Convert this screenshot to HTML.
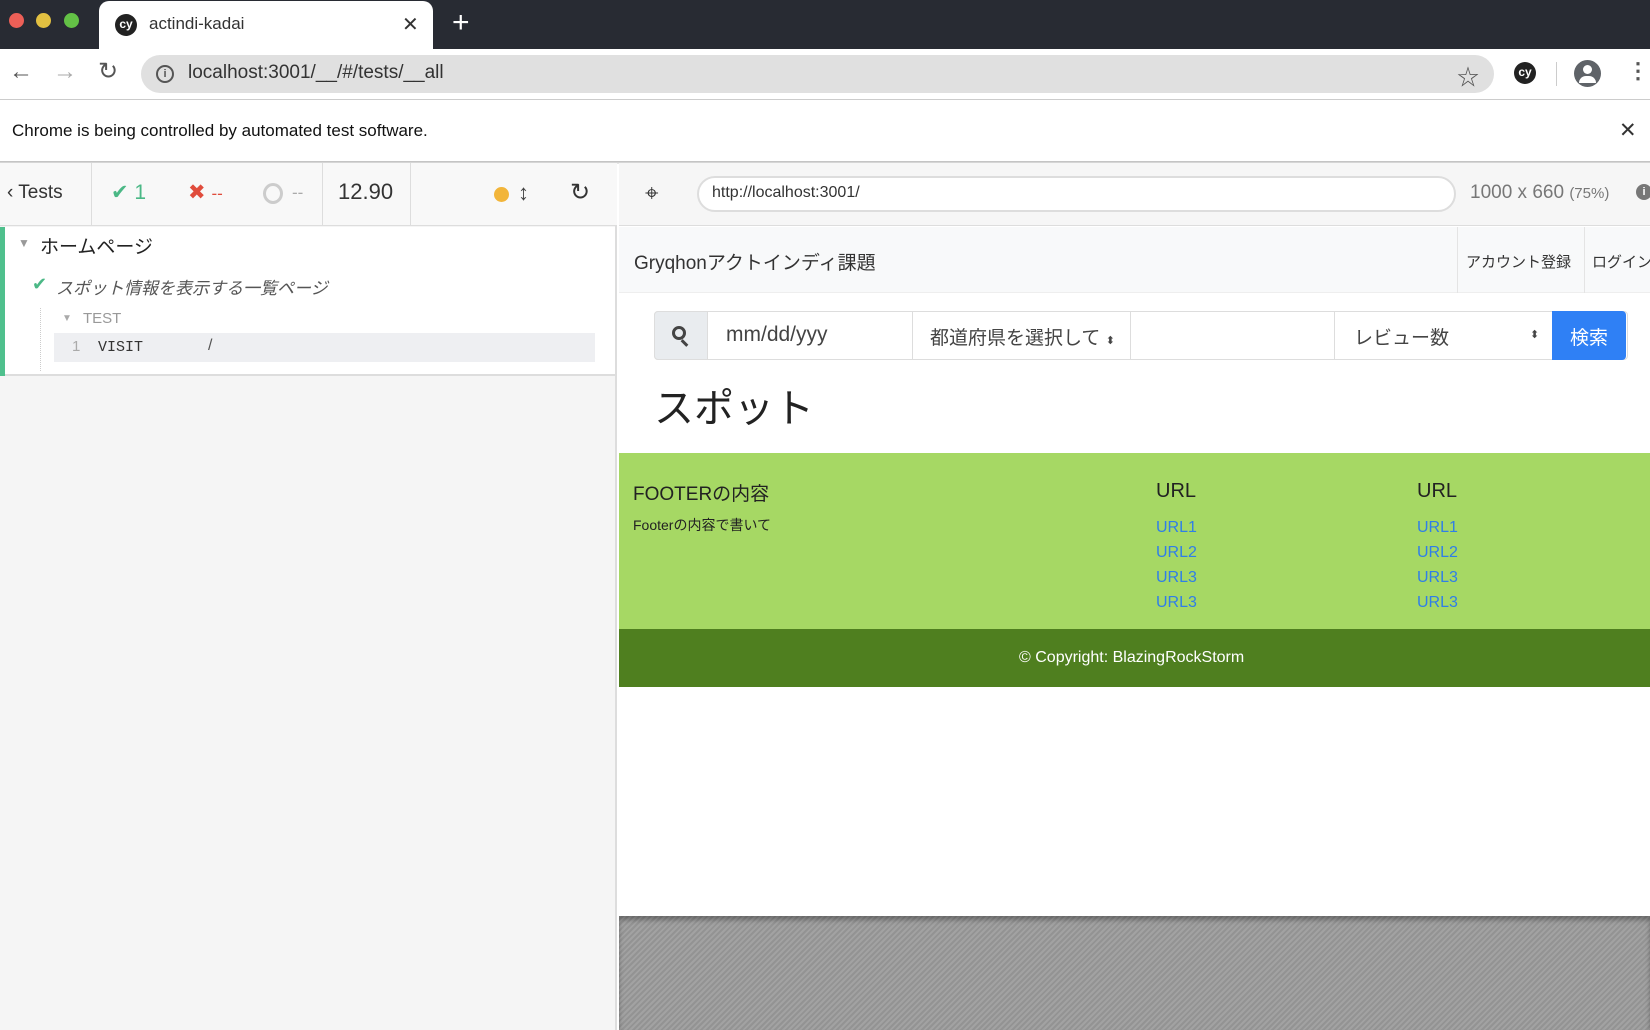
<!DOCTYPE html>
<html><head><meta charset="utf-8"><style>
*{margin:0;padding:0;box-sizing:border-box}
body{width:1650px;height:1030px;overflow:hidden;position:relative;font-family:"Liberation Sans","Noto Sans CJK JP",sans-serif;background:#fff;color:#222}
.a{position:absolute}
.t{white-space:nowrap}
</style></head><body>
<div class="a" style="left:0;top:0;width:1650px;height:49px;background:#282b33"></div>
<div class="a" style="left:9px;top:13px;width:15px;height:15px;border-radius:50%;background:#ec5f57"></div>
<div class="a" style="left:36px;top:13px;width:15px;height:15px;border-radius:50%;background:#e2c041"></div>
<div class="a" style="left:64px;top:13px;width:15px;height:15px;border-radius:50%;background:#63c146"></div>
<div class="a" style="left:99px;top:1px;width:334px;height:48px;background:#fff;border-radius:10px 10px 0 0"></div>
<div class="a t" style="left:115px;top:14px;width:22px;height:22px;border-radius:50%;background:#222;color:#fff;font-size:12px;font-weight:bold;text-align:center;line-height:21px">cy</div>
<div class="a t" style="left:149px;top:14px;font-size:17px;color:#333">actindi-kadai</div>
<div class="a t" style="left:402px;top:12px;font-size:20px;color:#333">✕</div>
<div class="a t" style="left:452px;top:6px;font-size:30px;color:#fff;font-weight:300">+</div>
<div class="a" style="left:0;top:49px;width:1650px;height:51px;background:#fff;border-bottom:1px solid #ccc"></div>
<div class="a t" style="left:9px;top:58px;font-size:24px;color:#555">←</div>
<div class="a t" style="left:53px;top:58px;font-size:24px;color:#aaa">→</div>
<div class="a t" style="left:98px;top:57px;font-size:24px;color:#555">↻</div>
<div class="a" style="left:141px;top:55px;width:1353px;height:38px;border-radius:19px;background:#e0e0e0"></div>
<div class="a" style="left:156px;top:65px;width:18px;height:18px;border:2px solid #555;border-radius:50%;font-size:11px;text-align:center;line-height:14px;font-weight:bold;color:#555">i</div>
<div class="a t" style="left:188px;top:62px;font-size:19px;color:#333">localhost:3001/__/#/tests/__all</div>
<div class="a t" style="left:1457px;top:60px;font-size:22px;color:#555">☆</div>
<div class="a t" style="left:1514px;top:62px;width:22px;height:22px;border-radius:50%;background:#222;color:#fff;font-size:12px;font-weight:bold;text-align:center;line-height:21px">cy</div>
<div class="a" style="left:1556px;top:62px;width:1px;height:24px;background:#ccc"></div>
<div class="a" style="left:1574px;top:60px;width:27px;height:27px;border-radius:50%;background:#5f6368"></div>
<div class="a" style="left:1583px;top:65px;width:9px;height:9px;border-radius:50%;background:#fff"></div>
<div class="a" style="left:1579px;top:76px;width:17px;height:7px;border-radius:8px 8px 0 0;background:#fff"></div>
<div class="a t" style="left:1627px;top:58px;font-size:22px;color:#555;font-weight:bold">⋮</div>
<div class="a t" style="left:12px;top:121px;font-size:17px;color:#111">Chrome is being controlled by automated test software.</div>
<div class="a t" style="left:1619px;top:118px;font-size:21px;color:#333">✕</div>
<div class="a" style="left:0;top:161px;width:1650px;height:3px;background:linear-gradient(#bbb,#eee)"></div>
<div class="a" style="left:0;top:163px;width:617px;height:867px;background:#f5f5f5;border-right:2px solid #ddd"></div>
<div class="a" style="left:0;top:163px;width:617px;height:63px;background:#f8f8f8;border-bottom:1px solid #ddd"></div>
<div class="a" style="left:91px;top:163px;width:1px;height:63px;background:#ddd"></div>
<div class="a" style="left:322px;top:163px;width:1px;height:63px;background:#ddd"></div>
<div class="a" style="left:410px;top:163px;width:1px;height:63px;background:#ddd"></div>
<div class="a t" style="left:7px;top:182px;font-size:19px;color:#333">‹ Tests</div>
<div class="a t" style="left:111px;top:180px;font-size:21px;color:#4bb886">✔ 1</div>
<div class="a t" style="left:188px;top:180px;font-size:21px;color:#e04c3c">✖ <span style="font-size:17px">--</span></div>
<div class="a" style="left:263px;top:183px;width:20px;height:21px;border:3px solid #ccc;border-radius:50%"></div>
<div class="a t" style="left:292px;top:183px;font-size:17px;color:#aaa">--</div>
<div class="a t" style="left:338px;top:179px;font-size:22px;color:#333">12.90</div>
<div class="a" style="left:494px;top:187px;width:15px;height:15px;border-radius:50%;background:#f2b53a"></div>
<div class="a t" style="left:518px;top:180px;font-size:22px;color:#444;font-weight:bold">↕</div>
<div class="a t" style="left:570px;top:178px;font-size:24px;color:#333">↻</div>
<div class="a" style="left:0;top:227px;width:615px;height:149px;background:#fff;border-bottom:2px solid #ddd"></div>
<div class="a" style="left:0;top:227px;width:5px;height:149px;background:#4fc08d"></div>
<div class="a t" style="left:18px;top:236px;font-size:12px;color:#999">▼</div>
<div class="a t" style="left:40px;top:232px;font-size:19px;color:#222">ホームページ</div>
<div class="a t" style="left:32px;top:274px;font-size:18px;color:#4bb886">✔</div>
<div class="a t" style="left:56px;top:274px;font-size:17px;color:#555;font-style:italic">スポット情報を表示する一覧ページ</div>
<div class="a" style="left:40px;top:308px;width:0;height:63px;border-left:1px dotted #ccc"></div>
<div class="a t" style="left:62px;top:313px;font-size:10px;color:#aaa">▼</div>
<div class="a t" style="left:83px;top:310px;font-size:15px;color:#999">TEST</div>
<div class="a" style="left:54px;top:333px;width:541px;height:29px;background:#eeeff2"></div>
<div class="a t" style="left:72px;top:338px;font-size:15px;color:#aaa">1</div>
<div class="a t" style="left:98px;top:339px;font-size:15px;color:#333;font-family:'Liberation Mono',monospace">VISIT</div>
<div class="a t" style="left:208px;top:337px;font-size:16px;color:#555">/</div>
<div class="a" style="left:619px;top:163px;width:1031px;height:63px;background:#f6f6f6;border-bottom:1px solid #ddd"></div>
<div class="a t" style="left:645px;top:180px;font-size:24px;color:#333">⌖</div>
<div class="a" style="left:697px;top:176px;width:759px;height:36px;border:2px solid #ddd;border-radius:18px;background:#fff"></div>
<div class="a t" style="left:712px;top:184px;font-size:16px;color:#333">http://localhost:3001/</div>
<div class="a t" style="left:1470px;top:182px;font-size:19px;color:#777">1000 x 660 <span style="font-size:15px">(75%)</span></div>
<div class="a" style="left:1636px;top:184px;width:16px;height:16px;border-radius:50%;background:#777;color:#fff;font-size:11px;font-weight:bold;text-align:center;line-height:16px">i</div>
<div class="a" style="left:619px;top:227px;width:1031px;height:689px;background:#fff"></div>
<div class="a" style="left:619px;top:227px;width:1031px;height:66px;background:#f8f9fa;border-bottom:1px solid #eee"></div>
<div class="a t" style="left:634px;top:248px;font-size:19px;color:#333">Gryqhonアクトインディ課題</div>
<div class="a" style="left:1457px;top:227px;width:1px;height:66px;background:#e4e4e4"></div>
<div class="a" style="left:1584px;top:227px;width:1px;height:66px;background:#e4e4e4"></div>
<div class="a t" style="left:1466px;top:251px;font-size:15px;color:#333">アカウント登録</div>
<div class="a t" style="left:1592px;top:251px;font-size:15px;color:#333">ログイン</div>
<div class="a" style="left:654px;top:311px;width:974px;height:49px;border:1px solid #ddd;border-radius:4px;background:#fff"></div>
<div class="a" style="left:654px;top:311px;width:54px;height:49px;border-radius:4px 0 0 4px;background:#e9ecef;border:1px solid #ddd"></div>
<div class="a" style="left:672px;top:326px;width:14px;height:14px;border:3px solid #444;border-radius:50%"></div>
<div class="a" style="left:683px;top:339px;width:3px;height:8px;background:#444;transform:rotate(-45deg)"></div>
<div class="a t" style="left:726px;top:323px;font-size:21px;color:#444">mm/dd/yyy</div>
<div class="a" style="left:912px;top:311px;width:1px;height:49px;background:#ddd"></div>
<div class="a t" style="left:930px;top:323px;font-size:19px;color:#444">都道府県を選択して <span style="font-size:11px">⬍</span></div>
<div class="a" style="left:1130px;top:311px;width:1px;height:49px;background:#ddd"></div>
<div class="a" style="left:1334px;top:311px;width:1px;height:49px;background:#ddd"></div>
<div class="a t" style="left:1354px;top:323px;font-size:19px;color:#444">レビュー数</div>
<div class="a t" style="left:1530px;top:328px;font-size:11px;color:#444">⬍</div>
<div class="a" style="left:1552px;top:311px;width:74px;height:49px;background:#2f80f5;border-radius:0 4px 4px 0"></div>
<div class="a t" style="left:1570px;top:323px;font-size:19px;color:#fff">検索</div>
<div class="a t" style="left:654px;top:376px;font-size:40px;font-weight:normal;color:#222">スポット</div>
<div class="a" style="left:619px;top:453px;width:1031px;height:176px;background:#a6d864"></div>
<div class="a t" style="left:633px;top:479px;font-size:19px;color:#222">FOOTERの内容</div>
<div class="a t" style="left:633px;top:515px;font-size:14px;color:#222">Footerの内容で書いて</div>
<div class="a t" style="left:1156px;top:480px;font-size:20px;color:#222">URL</div>
<div class="a t" style="left:1417px;top:480px;font-size:20px;color:#222">URL</div>
<div class="a" style="left:1156px;top:515px;font-size:16px;color:#2f7ee8;line-height:25px">URL1<br>URL2<br>URL3<br>URL3</div>
<div class="a" style="left:1417px;top:515px;font-size:16px;color:#2f7ee8;line-height:25px">URL1<br>URL2<br>URL3<br>URL3</div>
<div class="a" style="left:619px;top:629px;width:1031px;height:58px;background:#4f7f1f"></div>
<div class="a t" style="left:1019px;top:649px;font-size:16px;color:#fff">© Copyright: BlazingRockStorm</div>
<div class="a" style="left:619px;top:916px;width:1031px;height:114px;background:repeating-linear-gradient(-45deg,#a2a2a2 0 2px,#939393 2px 4px);box-shadow:inset 0 4px 5px rgba(0,0,0,.3)"></div>
</body></html>
